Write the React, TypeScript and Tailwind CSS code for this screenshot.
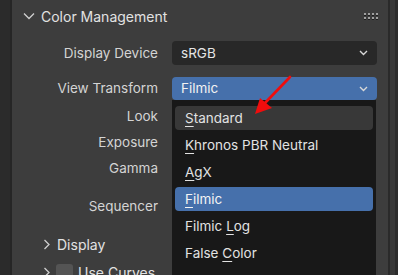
import React from "react";

const Chevron = ({ className = "" }: { className?: string }) => (
  <svg width="9" height="6" viewBox="0 0 9 6" className={className}>
    <path d="M1 1 L4.5 4.5 L8 1" fill="none" stroke="#d8d8d8" strokeWidth="1.4" />
  </svg>
);

const U = ({ children }: { children: React.ReactNode }) => (
  <span className="underline decoration-1 underline-offset-[3px]">{children}</span>
);

export default function App() {
  const label = "w-[146px] text-right text-[#d4d4d4]";
  const row = "shrink-0 flex items-center";
  return (
    <div
      className="relative w-[398px] h-[275px] overflow-hidden bg-[#2b2b2b] flex text-[13.5px]"
      style={{ fontFamily: "Inter, 'DejaVu Sans', sans-serif" }}
    >
      <div className="w-[10px] bg-[#2b2b2b]" />
      <div className="w-[2px] bg-[#262626]" />
      <div className="flex-1 bg-[#3d3d3d] flex flex-col overflow-hidden">
        {/* header */}
        <div className={`h-[32px] ${row}`}>
          <svg width="12" height="8" viewBox="0 0 12 8" className="ml-[11px]">
            <path d="M1 1.5 L6 6.5 L11 1.5" fill="none" stroke="#cfcfcf" strokeWidth="1.3" />
          </svg>
          <span className="ml-[6px] text-[14px] text-[#e2e2e2]">Color Management</span>
          <div className="ml-auto mr-[10px] grid grid-cols-4 gap-x-[2px] gap-y-[1px]">
            {Array.from({ length: 8 }).map((_, i) => (
              <div key={i} className="w-[2px] h-[2px] bg-[#a0a0a0] border-b border-[#1e1e1e] box-content" />
            ))}
          </div>
        </div>
        {/* Display Device */}
        <div className={`mt-[9px] h-[24px] ${row}`}>
          <div className={label}>Display Device</div>
          <div className="ml-[14px] w-[205px] h-[24px] rounded-[4px] bg-[#282828] flex items-center px-[9px] text-[#e6e6e6]">
            <span>sRGB</span>
            <Chevron className="ml-auto" />
          </div>
        </div>
        {/* View Transform */}
        <div className={`mt-[12px] h-[23px] ${row}`}>
          <div className={label}>View Transform</div>
          <div className="ml-[14px] w-[205px] h-[23px] rounded-[4px] bg-[#4670ab] flex items-center px-[9px] text-[#f2f2f2]">
            <span>Filmic</span>
            <Chevron className="ml-auto" />
          </div>
        </div>
        <div className={`mt-[3px] h-[26px] ${row}`}>
          <div className={label}>Look</div>
        </div>
        <div className={`h-[26px] ${row}`}>
          <div className={label}>Exposure</div>
        </div>
        <div className={`h-[27px] ${row}`}>
          <div className={label}>Gamma</div>
        </div>
        <div className={`mt-[11px] h-[26px] ${row}`}>
          <div className={label}>Sequencer</div>
        </div>
        <div className={`mt-[12px] h-[26px] ${row}`}>
          <svg width="8" height="11" viewBox="0 0 8 11" className="ml-[31px]">
            <path d="M1.5 1 L6 5.5 L1.5 10" fill="none" stroke="#cfcfcf" strokeWidth="1.3" />
          </svg>
          <span className="ml-[6px] text-[14px] text-[#e2e2e2]">Display</span>
        </div>
        <div className={`mt-[2px] h-[26px] ${row}`}>
          <svg width="8" height="11" viewBox="0 0 8 11" className="ml-[31px]">
            <path d="M1.5 1 L6 5.5 L1.5 10" fill="none" stroke="#cfcfcf" strokeWidth="1.3" />
          </svg>
          <div className="ml-[5px] w-[17px] h-[17px] rounded-[3px] bg-[#545454]" />
          <span className="ml-[5px] text-[14px] text-[#e2e2e2]">Use Curves</span>
        </div>
      </div>
      <div className="w-[2px] bg-[#2a2a2a]" />
      <div className="w-[5px] bg-[#383838]" />
      <div className="w-[3px] bg-[#2c2c2c]" />

      {/* dropdown menu */}
      <div className="absolute left-[172px] top-[100px] w-[204px] h-[200px] bg-[#181818] px-[3px] pt-[6px] flex flex-col gap-[3px] text-[#e2e2e2]">
        <div className="h-[24px] shrink-0 rounded-[4px] bg-[#383838] flex items-center px-[10px]">
          <span><U>S</U>tandard</span>
        </div>
        <div className="h-[24px] shrink-0 flex items-center px-[10px]">
          <span><U>K</U>hronos PBR Neutral</span>
        </div>
        <div className="h-[24px] shrink-0 flex items-center px-[10px]">
          <span><U>A</U>gX</span>
        </div>
        <div className="h-[24px] shrink-0 rounded-[4px] bg-[#4670ab] flex items-center px-[10px] text-[#f4f4f4]">
          <span><U>F</U>ilmic</span>
        </div>
        <div className="h-[24px] shrink-0 flex items-center px-[10px]">
          <span>Filmic <U>L</U>og</span>
        </div>
        <div className="h-[24px] shrink-0 flex items-center px-[10px]">
          <span>False <U>C</U>olor</span>
        </div>
        <div className="h-[24px] shrink-0 flex items-center px-[10px]">
          <span><U>R</U>aw</span>
        </div>
      </div>

      {/* red arrow */}
      <svg className="absolute left-0 top-0 pointer-events-none" width="398" height="275" viewBox="0 0 398 275">
        <line x1="290" y1="77" x2="264" y2="104" stroke="#f00d0d" strokeWidth="2.6" strokeLinecap="round" />
        <polygon points="255,114 260,98 272,108" fill="#f00d0d" />
      </svg>
    </div>
  );
}
